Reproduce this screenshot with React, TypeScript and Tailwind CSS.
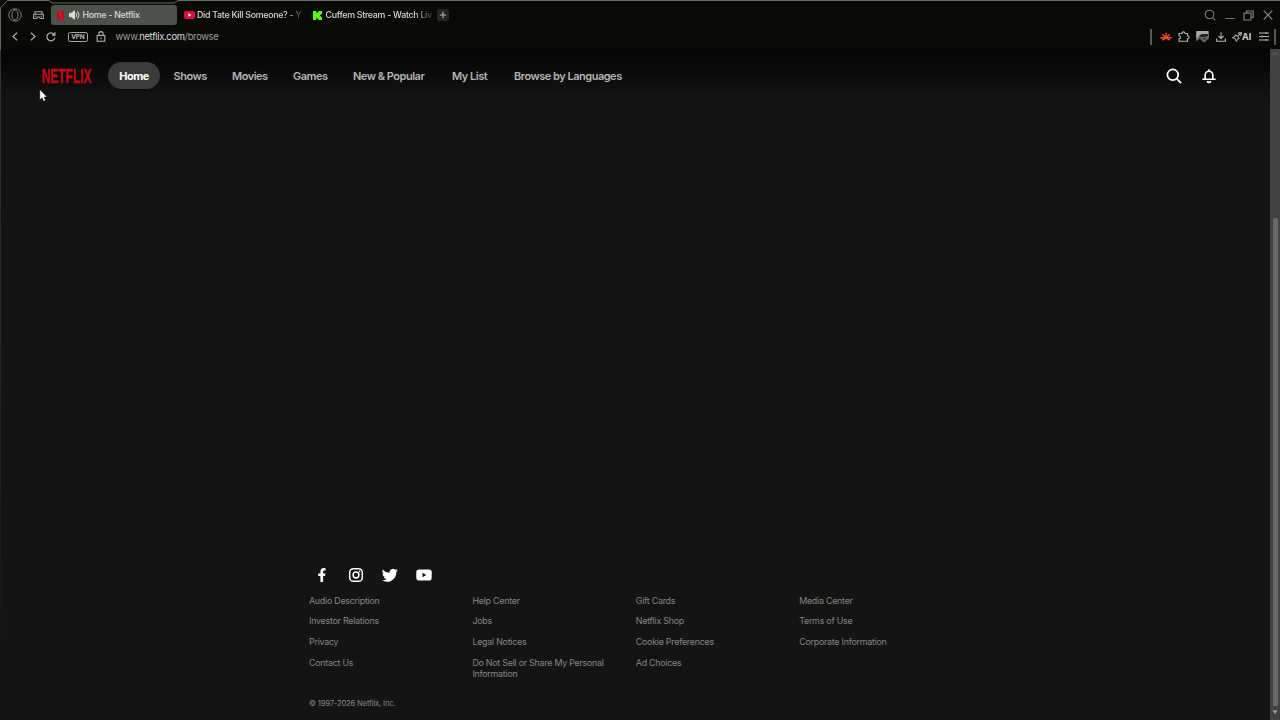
import React from "react";

type Item = { label: string; cls: string };

const nav: Item[] = [
  { label: "Shows", cls: "w-[58.5px]" },
  { label: "Movies", cls: "w-[61px]" },
  { label: "Games", cls: "w-[60px]" },
  { label: "New & Popular", cls: "w-[99px]" },
  { label: "My List", cls: "w-[62px]" },
  { label: "Browse by Languages", cls: "w-[130px]" },
];

const columns: string[][] = [
  ["Audio Description", "Investor Relations", "Privacy", "Contact Us"],
  ["Help Center", "Jobs", "Legal Notices", "Do Not Sell or Share My Personal Information"],
  ["Gift Cards", "Netflix Shop", "Cookie Preferences", "Ad Choices"],
  ["Media Center", "Terms of Use", "Corporate Information"],
];

function TabStrip() {
  return (
    <div className="flex h-[26px] items-center pt-[4px] text-[8.8px] leading-[14px] tracking-[-0.27px] text-[#d8dad6]">
      <svg className="ml-[8px] h-[14px] w-[14px] shrink-0" viewBox="0 0 14 14" fill="none" stroke="#83867f">
        <circle cx="7" cy="7" r="6.2" />
        <ellipse cx="7" cy="7" rx="3" ry="5" />
      </svg>
      <svg className="ml-[11px] h-[10px] w-[11px] shrink-0" viewBox="0 0 11 10" fill="none" stroke="#a5a8a2" strokeWidth="1.1">
        <path d="M2 4V1.800h7V4M.6 4.200h9.800v4.300H7.200L6.400 7H4.600l-.8 1.500H.6z" />
        <path d="M2 6.300h1.500M7.500 6.300H9" />
      </svg>
      <div className="ml-[6.5px] flex h-[20px] w-[126.5px] shrink-0 items-center rounded-[3px] bg-[#4c514e]">
        <svg className="ml-[6.5px] h-[11px] w-[7px]" viewBox="0 0 7 11">
          <path d="M.2.500h2.400v10H.2zM4.400.500h2.400v10H4.400z" fill="#b80c1e" />
          <path d="M.2.500h2.400l4.200 10H4.400z" fill="#da1228" />
        </svg>
        <svg className="ml-[5px] h-[10px] w-[11px]" viewBox="0 0 11 10" fill="none" stroke="#d5d9d5">
          <path d="M.5 3.2h2L5.5.8v8.4l-3-2.4h-2z" fill="#d5d9d5" />
          <path d="M7 3q1.4 2 0 4M8.6 1.4q3 3.600 0 7.200" />
        </svg>
        <span className="ml-[2.5px] whitespace-nowrap font-medium">Home - Netflix</span>
      </div>
      <div className="ml-[7px] flex w-[117px] shrink-0 items-center">
        <svg className="h-[8px] w-[11px] shrink-0" viewBox="0 0 11 8">
          <rect width="11" height="8" rx="2" fill="#df0b3b" />
          <path d="M4.3 2.2 7.5 4 4.3 5.8z" fill="#fff" />
        </svg>
        <span className="ml-[2px] whitespace-nowrap font-medium [mask-image:linear-gradient(90deg,#000_86%,transparent_105%)]">
          Did Tate Kill Someone? - Y
        </span>
      </div>
      <div className="ml-[12px] flex w-[117px] shrink-0 items-center">
        <svg className="h-[9px] w-[9px] shrink-0" viewBox="0 0 9 9" fill="#53fc18">
          <path d="M0 0h3.4v2h1V1h1V0H9v3H8v1H7v1h1v1h1v3H5.4V8h-1V7h-1v2H0z" />
        </svg>
        <span className="ml-[3.500px] whitespace-nowrap font-medium [mask-image:linear-gradient(90deg,#000_84%,transparent_104%)]">
          Cuffem Stream - Watch Liv
        </span>
      </div>
      <div className="ml-[6.5px] flex h-[12px] w-[12px] shrink-0 items-center justify-center rounded-[2px] bg-[#252624]">
        <svg className="h-[8px] w-[8px]" viewBox="0 0 8 8" stroke="#b2b4b0" strokeWidth="1.1">
          <path d="M4 .8v6.400M.8 4h6.400" />
        </svg>
      </div>
      <svg className="ml-auto h-[12px] w-[12px]" viewBox="0 0 12 12" fill="none" stroke="#7d7f7a" strokeWidth="1.1">
        <circle cx="5.5" cy="5.5" r="4.3" />
        <path d="m8.7 8.7 2.600 2.600" />
      </svg>
      <svg className="ml-[9px] h-[12px] w-[10px]" viewBox="0 0 10 12" stroke="#757772">
        <path d="M.5 9.500h9" />
      </svg>
      <svg className="ml-[8px] h-[11px] w-[11px]" viewBox="0 0 11 11" fill="none" stroke="#7d7f7a" strokeWidth="1.2">
        <path d="M1 3.200h7V10H1zM3.500 3.200V1h6.700v6.500H8" />
      </svg>
      <svg className="ml-[9px] mr-[7.500px] h-[10px] w-[10px]" viewBox="0 0 10 10" stroke="#898b86" strokeWidth="1.2">
        <path d="m.7.7 8.600 8.600M9.300.7.7 9.300" />
      </svg>
    </div>
  );
}

function AddressBar() {
  return (
    <div className="flex h-[23px] items-center pb-[2px]">
      <svg className="ml-[12px] h-[9px] w-[6px]" viewBox="0 0 6 9" fill="none" stroke="#b4b6b2" strokeWidth="1.2">
        <path d="M5.2.6 1 4.5l4.200 3.900" />
      </svg>
      <svg className="ml-[12px] h-[9px] w-[6px]" viewBox="0 0 6 9" fill="none" stroke="#b4b6b2" strokeWidth="1.2">
        <path d="M.8.6 5 4.5.8 8.400" />
      </svg>
      <svg className="ml-[10px] h-[10px] w-[10px]" viewBox="0 0 10 10" fill="none" stroke="#b4b6b2" strokeWidth="1.2">
        <path d="M8.8 5.8A4 4 0 1 1 8 2.300M8.900.3v2.900H6" />
      </svg>
      <svg className="ml-[12px] h-[10px] w-[20px]" viewBox="0 0 20 10">
        <rect x=".5" y=".5" width="19" height="9" rx="1.800" fill="none" stroke="#a9aba6" />
        <text x="10" y="7.400" textAnchor="middle" textLength="13.500" fontSize="6.500" fontWeight="700" fill="#b4b6b2">VPN</text>
      </svg>
      <svg className="ml-[8px] h-[11px] w-[10px]" viewBox="0 0 10 11" fill="none" stroke="#b4b6b2" strokeWidth="1.1">
        <path d="M1.2 4.500h7.600v5.700H1.200zM2.900 4.500V2.700a2.100 2.100 0 0 1 4.200 0v1.800M5 6.400v1.800" />
      </svg>
      <span className="ml-[9.500px] whitespace-nowrap text-[9.400px] leading-[14px] tracking-[-0.32px] text-[#9c9e98]">
        www.<span className="text-[#dcded9]">netflix.com</span>/browse
      </span>
      <div className="ml-auto h-[16px] w-[2px] bg-[#555955]" />
      <svg className="ml-[8px] h-[9px] w-[12px]" viewBox="0 0 12 9" fill="none" stroke="#ee4c28" strokeWidth="1.400">
        <path d="M.3 5.700h11.400M6 .8v5M2.300 2.200 6 5.700l3.700-3.500M2.200 8.200 6 5.900l3.800 2.300" />
      </svg>
      <svg className="ml-[6px] h-[11px] w-[12px]" viewBox="0 0 12 11" fill="none" stroke="#b4b6b2" strokeWidth="1.1">
        <path d="M1 2.500h2.800a1.600 1.600 0 0 1 3.200 0h2.500v2.300a1.500 1.500 0 0 1 0 3v2.400H1V7.800a1.500 1.500 0 0 0 0-3z" />
      </svg>
      <svg className="ml-[6px] h-[13px] w-[13px]" viewBox="0 0 13 13">
        <path d="M0 1h13v7l-2 2-2.500 2.500L6 11 4 8.500 0 11.500z" fill="#686a66" />
        <path d="M1 1h11v3H7L3 6 .5 9V3z" fill="#a7a9a5" />
        <path d="M3 5.500 6 4h6v1.800l-3 1-4 .5zM7 9l3-1.500L9 10z" fill="#20211f" />
      </svg>
      <svg className="ml-[7px] h-[10px] w-[10px]" viewBox="0 0 10 10" fill="none" stroke="#b4b6b2" strokeWidth="1.1">
        <path d="M5 .3v6M2.500 4 5 6.500 7.500 4M.6 6.500v2.800h8.800V6.500" />
      </svg>
      <svg className="ml-[6px] h-[10px] w-[10px]" viewBox="0 0 10 10" fill="none" stroke="#a0a29d" strokeWidth="1.1">
        <path d="M3.500 3 5.800 4.200 7 6.500l-1.500.6L4.300 9.200 3.200 6.800.8 5.700l2-1.200zM5.800 4.200 9 1M6 1.700 7.500.6h1.900v1.900L8.300 4" />
      </svg>
      <span className="w-[10px] text-[9px] font-bold leading-[12px] text-[#d0d2cd]">AI</span>
      <svg className="ml-[6.500px] h-[9px] w-[10px]" viewBox="0 0 10 9" fill="none" stroke="#b4b6b2" strokeWidth="1.1">
        <path d="M0 1h10M0 4.500h10M0 8h10M7 0v2M3 3.500v2M7 7v2" />
      </svg>
      <div className="ml-[5px] mr-[4.500px] h-[16px] w-[2px] bg-[#555955]" />
    </div>
  );
}

function SiteHeader() {
  return (
    <header className="flex h-[53px] items-center bg-gradient-to-b from-[#050505] to-[#141414] pl-[40.500px] text-[11px] font-semibold leading-[16px] tracking-[-0.49px] text-[#b4b4b4]">
      <div className="h-[16px] w-[51px] text-[#c70914]">
        <span className="block origin-left scale-x-[0.77] scale-y-[1.27] whitespace-nowrap font-['Liberation_Sans',sans-serif] text-[15.500px] font-bold leading-[17px] tracking-normal [-webkit-text-stroke:0.35px_#c70914]">
          NETFLIX
        </span>
      </div>
      <div className="ml-[15.500px] flex h-[27px] w-[52px] items-center justify-center rounded-full bg-[#3b3b3b] font-bold text-white">
        Home
      </div>
      <nav className="ml-[13.500px] flex">
        {nav.map((n) => (
          <a key={n.label} className={"whitespace-nowrap " + n.cls}>{n.label}</a>
        ))}
      </nav>
      <svg className="ml-auto h-[16px] w-[16px]" viewBox="0 0 16 16" fill="none" stroke="#fff" strokeWidth="1.7">
        <circle cx="6.800" cy="6.800" r="5.400" />
        <path d="m10.800 10.800 4.400 4.400" />
      </svg>
      <svg className="ml-[19px] mr-[53px] h-[16px] w-[16px]" viewBox="0 0 16 16" fill="none" stroke="#fff" strokeWidth="1.600">
        <path d="M8 1.200v2M4.200 11V7a3.800 3.800 0 0 1 7.600 0v4M1.300 11.300h13.400M6 13.400q2 1.900 4 0" />
      </svg>
    </header>
  );
}

function Footer() {
  return (
    <footer className="mt-auto ml-[307px] h-[153px] w-[655px] text-[8.900px] leading-[10.800px] tracking-[-0.25px] text-[#858585]">
      <div className="flex h-[16px] items-center gap-[18px] pl-[5.500px]">
        <svg className="h-[16px] w-[16px]" viewBox="0 0 16 16" fill="#fff">
          <path d="M6.400 15V9H4.200V6.400h2.200V4.600c0-2.300 1.300-3.500 3.300-3.500.9 0 1.900.2 1.900.2v2.100h-1.100c-1 0-1.400.6-1.400 1.300v1.700h2.400L11.100 9h-2v6z" />
        </svg>
        <svg className="h-[16px] w-[16px]" viewBox="0 0 16 16" fill="none" stroke="#fff" strokeWidth="1.500">
          <rect x="1.700" y="1.700" width="12.600" height="12.600" rx="3.600" />
          <circle cx="8" cy="8" r="2.900" />
          <circle cx="11.600" cy="4.400" r=".8" fill="#fff" stroke="none" />
        </svg>
        <svg className="h-[16px] w-[16px]" viewBox="0 0 24 24" fill="#fff">
          <path d="M23.6 4.9a9.700 9.700 0 0 1-2.800.8 4.900 4.900 0 0 0 2.100-2.700 9.800 9.800 0 0 1-3.100 1.200 4.900 4.900 0 0 0-8.300 4.500A13.900 13.900 0 0 1 1.400 3.600a4.900 4.900 0 0 0 1.500 6.500 4.900 4.900 0 0 1-2.200-.6v.1a4.900 4.900 0 0 0 3.900 4.800 4.900 4.900 0 0 1-2.200.1 4.900 4.900 0 0 0 4.600 3.400A9.900 9.900 0 0 1 0 19.900a13.900 13.900 0 0 0 7.500 2.200c9.100 0 14.200-7.700 13.900-14.600a9.900 9.900 0 0 0 2.200-2.600z" />
        </svg>
        <svg className="h-[16px] w-[16px]" viewBox="0 0 16 16">
          <rect x=".3" y="2.500" width="15.400" height="11" rx="2.800" fill="#fff" />
          <path d="M6.500 5.800 10.300 8l-3.800 2.200z" fill="#141414" />
        </svg>
      </div>
      <div className="mt-[12.500px] flex h-[102.500px] pl-[1px]">
        {columns.map((col) => (
          <ul key={col[0]} className="flex w-[163.400px] shrink-0 flex-col gap-[10.100px] pr-[26px]">
            {col.map((label) => (
              <li key={label}>{label}</li>
            ))}
          </ul>
        ))}
      </div>
      <div className="pl-[1px] text-[7.700px] leading-[11px] tracking-[-0.2px]">© 1997-2026 Netflix, Inc.</div>
    </footer>
  );
}

export default function App() {
  return (
    <div className="relative flex h-[720px] w-[1280px] flex-col overflow-hidden bg-[#090a07] font-[Inter,sans-serif]">
      <TabStrip />
      <AddressBar />
      <div className="flex h-[671px]">
        <div className="w-[1px] shrink-0 bg-gradient-to-b from-[#303330] via-[#252725] to-[#101110]" />
        <main className="flex min-w-0 flex-1 flex-col bg-[#141414]">
          <SiteHeader />
          <Footer />
        </main>
        <div className="flex w-[10px] shrink-0 flex-col items-center bg-[#424242]">
          <svg className="h-[10px] w-[8px]" viewBox="0 0 8 10" fill="none" stroke="#656565">
            <path d="m1.500 6 2.500-2.500L6.500 6" />
          </svg>
          <div className="mt-[159px] h-[488px] w-[5px] rounded-t-[2px] bg-[#686868]" />
          <svg className="h-[11px] w-[8px]" viewBox="0 0 8 11" fill="#aaa">
            <path d="M1.500 4.500h5L4 8z" />
          </svg>
        </div>
      </div>
      <svg className="pointer-events-none absolute left-0 top-0 h-[50px] w-[1280px]" viewBox="0 0 1280 50" fill="none" stroke="#666966">
        <path d="M.5 50V8l7-7.500H49l3 2.500h122l4-2.500h1102" />
      </svg>
      <svg className="pointer-events-none absolute left-[39px] top-[89px] h-[13px] w-[9px]" viewBox="0 0 9 13">
        <path d="M.8.6v10.300l2.300-2.100 1.500 3.400 2-.9L5.100 8h3z" fill="#fff" stroke="#111" strokeWidth=".5" />
      </svg>
    </div>
  );
}
